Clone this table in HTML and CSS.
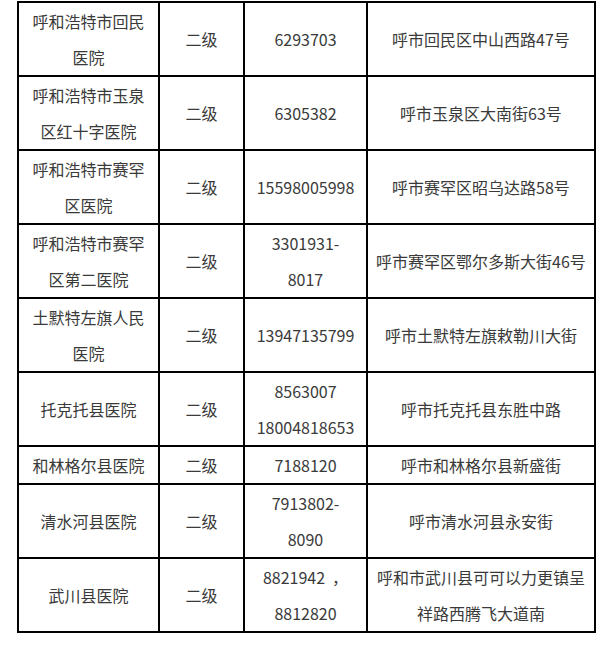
FILE: index.html
```html
<!DOCTYPE html>
<html lang="zh-CN">
<head>
<meta charset="utf-8">
<link rel="stylesheet" href="styles.css">
</head>
<body>
<table class="list">
  <colgroup>
    <col class="c-name">
    <col class="c-level">
    <col class="c-phone">
    <col class="c-addr">
  </colgroup>
  <tbody>
    <tr class="r2">
      <td>呼和浩特市回民<br>医院</td>
      <td>二级</td>
      <td>6293703</td>
      <td>呼市回民区中山西路47号</td>
    </tr>
    <tr class="r2">
      <td>呼和浩特市玉泉<br>区红十字医院</td>
      <td>二级</td>
      <td>6305382</td>
      <td>呼市玉泉区大南街63号</td>
    </tr>
    <tr class="r2">
      <td>呼和浩特市赛罕<br>区医院</td>
      <td>二级</td>
      <td>15598005998</td>
      <td>呼市赛罕区昭乌达路58号</td>
    </tr>
    <tr class="r2">
      <td>呼和浩特市赛罕<br>区第二医院</td>
      <td>二级</td>
      <td>3301931-<br>8017</td>
      <td>呼市赛罕区鄂尔多斯大街46号</td>
    </tr>
    <tr class="r2">
      <td>土默特左旗人民<br>医院</td>
      <td>二级</td>
      <td>13947135799</td>
      <td>呼市土默特左旗敕勒川大街</td>
    </tr>
    <tr class="r2">
      <td>托克托县医院</td>
      <td>二级</td>
      <td>8563007<br>18004818653</td>
      <td>呼市托克托县东胜中路</td>
    </tr>
    <tr class="r1">
      <td>和林格尔县医院</td>
      <td>二级</td>
      <td>7188120</td>
      <td>呼市和林格尔县新盛街</td>
    </tr>
    <tr class="r2">
      <td>清水河县医院</td>
      <td>二级</td>
      <td>7913802-<br>8090</td>
      <td>呼市清水河县永安街</td>
    </tr>
    <tr class="r2">
      <td>武川县医院</td>
      <td>二级</td>
      <td>8821942<span class="comma">，</span><br>8812820</td>
      <td>呼和市武川县可可以力更镇呈<br>祥路西腾飞大道南</td>
    </tr>
  </tbody>
</table>
</body>
</html>
```

FILE: styles.css
```css
html, body {
  margin: 0;
  padding: 0;
  background: #ffffff;
}

body {
  padding: 1px 0 0 17px;
}

.list {
  border-collapse: collapse;
  table-layout: fixed;
  width: 577px;
  font-family: "Noto Sans CJK SC", "Microsoft YaHei", sans-serif;
  font-size: 16px;
  color: #3a3a3a;
}

.c-name { width: 141px; }
.c-level { width: 85px; }
.c-phone { width: 123px; }
.c-addr { width: 228px; }

.list td {
  border: 2px solid #000;
  padding: 0;
  text-align: center;
  vertical-align: middle;
  line-height: 36px;
  white-space: nowrap;
}

.r2 td { height: 72px; }
.r1 td { height: 36px; }

.comma {
  padding-left: 7px;
}
```
